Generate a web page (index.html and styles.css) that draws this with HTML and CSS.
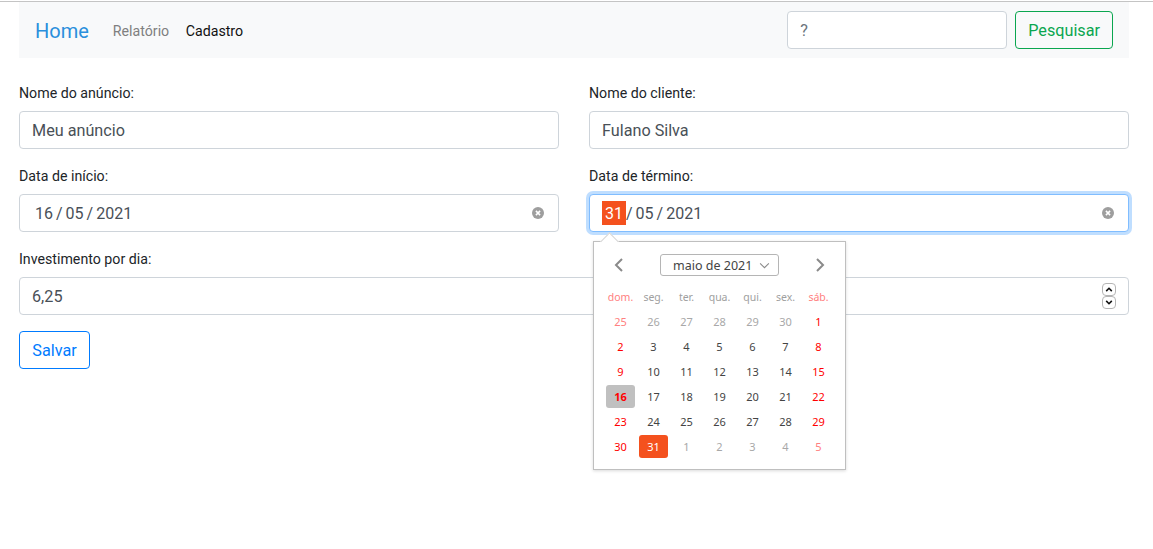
FILE: index.html
```html
<!DOCTYPE html>
<html lang="pt-BR">
<head>
    <meta charset="UTF-8">
    <meta name="viewport" content="width=device-width, initial-scale=1.0">
    <title>Cadastro</title>
    <link rel="stylesheet" href="styles.css">
</head>
<body>

    <div class="container">
        <nav class="navbar">
            <a class="brand" href="#">Home</a>
            <a class="nav-link" href="#">Relatório</a>
            <a class="nav-link active" href="#">Cadastro</a>
            <form class="search">
                <input class="search-input" type="text" placeholder="?">
                <button class="btn btn-green" type="button">Pesquisar</button>
            </form>
        </nav>

        <form class="ad-form">
            <div class="field">
                <label for="adName">Nome do anúncio:</label>
                <input class="form-control" type="text" id="adName" value="Meu anúncio">
            </div>
            <div class="field">
                <label for="clientName">Nome do cliente:</label>
                <input class="form-control" type="text" id="clientName" value="Fulano Silva">
            </div>
            <div class="field">
                <label>Data de início:</label>
                <div class="form-control date-input">
                    <span class="date-text"><span class="date-part">16</span>/<span class="date-part">05</span>/<span class="date-part">2021</span></span>
                    <svg class="clear-icon" viewBox="0 0 12 12"><circle cx="6" cy="6" r="6" fill="#9e9e9e"/><path d="M3.9 3.9l4.2 4.2M8.1 3.9l-4.2 4.2" stroke="#fff" stroke-width="1.5"/></svg>
                </div>
            </div>
            <div class="field">
                <label>Data de término:</label>
                <div class="form-control date-input focused">
                    <span class="date-text"><span class="date-part selected">31</span>/<span class="date-part">05</span>/<span class="date-part">2021</span></span>
                    <svg class="clear-icon" viewBox="0 0 12 12"><circle cx="6" cy="6" r="6" fill="#9e9e9e"/><path d="M3.9 3.9l4.2 4.2M8.1 3.9l-4.2 4.2" stroke="#fff" stroke-width="1.5"/></svg>
                </div>

                <div class="calendar">
                    <div class="cal-header">
                        <svg class="cal-arrow" viewBox="0 0 12 16"><path d="M9 2L3 8l6 6" fill="none" stroke="#8a8a8a" stroke-width="2"/></svg>
                        <div class="cal-month">maio de 2021
                            <svg viewBox="0 0 12 8"><path d="M1 1.5l5 5 5-5" fill="none" stroke="#8a8a8a" stroke-width="1.2"/></svg>
                        </div>
                        <svg class="cal-arrow" viewBox="0 0 12 16"><path d="M3 2l6 6-6 6" fill="none" stroke="#8a8a8a" stroke-width="2"/></svg>
                    </div>
                    <div class="cal-grid" id="calGrid"></div>
                </div>
            </div>
            <div class="field wide">
                <label for="daily">Investimento por dia:</label>
                <div class="form-control number-input">
                    <span>6,25</span>
                    <div class="spinner">
                        <span class="spin-btn"><svg viewBox="0 0 10 6"><path d="M1.5 5L5 1.5 8.5 5" fill="none" stroke="#111" stroke-width="2"/></svg></span>
                        <span class="spin-btn"><svg viewBox="0 0 10 6"><path d="M1.5 1L5 4.5 8.5 1" fill="none" stroke="#111" stroke-width="2"/></svg></span>
                    </div>
                </div>
            </div>
            <div class="field wide">
                <button class="btn btn-blue" type="button">Salvar</button>
            </div>
        </form>
    </div>

    <script>
        // Monta os dias do calendario de maio de 2021
        const grid = document.getElementById('calGrid');
        const weekdays = ['dom.', 'seg.', 'ter.', 'qua.', 'qui.', 'sex.', 'sáb.'];
        const days = [25, 26, 27, 28, 29, 30];
        for (let d = 1; d <= 31; d++) days.push(d);
        for (let d = 1; d <= 5; d++) days.push(d);

        weekdays.forEach(function(name, i) {
            const cell = document.createElement('div');
            cell.className = 'cal-weekday' + (i === 0 || i === 6 ? ' weekend' : '');
            cell.innerText = name;
            grid.appendChild(cell);
        });

        days.forEach(function(day, i) {
            const outside = i < 6 || i > 36;
            const cell = document.createElement('div');
            let cls = 'cal-day';
            if (i % 7 === 0 || i % 7 === 6) cls += ' weekend';
            if (outside) cls += ' outside';
            if (!outside && day === 16) cls += ' start';
            if (!outside && day === 31) cls += ' end';
            cell.className = cls;
            const inner = document.createElement('span');
            inner.innerText = day;
            cell.appendChild(inner);
            grid.appendChild(cell);
        });
    </script>

</body>
</html>
```

FILE: styles.css
```css
* {
    box-sizing: border-box;
}
html {
    padding-top: 1px;
    background-color: white;
}
body {
    font-family: Roboto, Arial, sans-serif;
    margin: 0;
    padding: 0;
    min-height: 548px;
    color: #212529;
    background-color: white;
    border-top: 1px solid #c4c4c4;
}
.container {
    padding: 0 24px 0 19px;
}
.navbar {
    display: flex;
    align-items: center;
    height: 56px;
    padding: 0 16px;
    background-color: #f8f9fa;
}
.brand {
    margin-right: 24px;
    padding-top: 2px;
    font-size: 20px;
    color: #2a8fdc;
    text-decoration: none;
}
.nav-link {
    margin-right: 16.5px;
    padding-top: 2px;
    font-size: 14.2px;
    color: #7f7f7f;
    text-decoration: none;
}
.nav-link.active {
    color: #111;
}
.search {
    display: flex;
    gap: 8px;
    margin-left: auto;
}
.search-input {
    width: 220px;
    height: 38px;
    padding: 6px 12px;
    font-family: inherit;
    font-size: 16.2px;
    color: #495057;
    background-color: white;
    border: 1px solid #ced4da;
    border-radius: 4px;
}
.search-input::placeholder {
    color: #6c757d;
}
.btn {
    height: 38px;
    padding: 0 12px;
    font-family: inherit;
    font-size: 16.2px;
    background: transparent;
    border-radius: 4px;
    cursor: pointer;
}
.btn-green {
    color: #0aa64f;
    border: 1px solid #0aa64f;
}
.btn-blue {
    width: 71px;
    color: #007bff;
    border: 1px solid #007bff;
}
.ad-form {
    display: grid;
    grid-template-columns: 1fr 1fr;
    column-gap: 30px;
    row-gap: 16px;
    margin-top: 24px;
}
.field {
    position: relative;
}
.field.wide {
    grid-column: 1 / 3;
}
label {
    display: block;
    margin-bottom: 7px;
    padding-top: 1px;
    font-size: 14.2px;
    line-height: 21px;
}
.form-control {
    display: flex;
    align-items: center;
    width: 100%;
    height: 38px;
    padding: 6px 12px;
    font-family: inherit;
    font-size: 16.2px;
    color: #495057;
    background-color: white;
    border: 1px solid #ced4da;
    border-radius: 4px;
}
.date-input.focused {
    border-color: #80bdff;
    box-shadow: 0 0 0 3px rgba(0, 123, 255, 0.25);
}
.date-text {
    flex: 1;
    display: flex;
    align-items: center;
    font-size: 16px;
}
.date-part {
    padding: 1px 3px 0;
    line-height: 23px;
}
.date-part.selected {
    color: white;
    background-color: #f4511e;
}
.clear-icon {
    width: 12px;
    height: 12px;
    margin-right: 2px;
}
.number-input {
    justify-content: space-between;
}
.spinner {
    display: flex;
    flex-direction: column;
}
.spin-btn {
    display: flex;
    align-items: center;
    justify-content: center;
    width: 14px;
    height: 13px;
    border: 1px solid #b5b5b5;
    border-radius: 4px;
}
.spin-btn svg {
    width: 8px;
    height: 5px;
}
.calendar {
    position: absolute;
    top: calc(100% + 9px);
    left: 4px;
    z-index: 2;
    width: 253px;
    height: 229px;
    padding: 0 10px;
    font-family: "Noto Sans", sans-serif;
    background-color: white;
    border: 1px solid #bfbfbf;
    box-shadow: 0 1px 3px rgba(0, 0, 0, 0.15);
}
.calendar::before {
    content: "";
    position: absolute;
    top: -7px;
    left: 9px;
    width: 12px;
    height: 12px;
    background-color: white;
    border-top: 1px solid #d5d5d5;
    border-left: 1px solid #d5d5d5;
    transform: rotate(45deg);
}
.cal-header {
    display: flex;
    align-items: center;
    gap: 35px;
    height: 43px;
    padding: 3px 0 0 9px;
}
.cal-arrow {
    width: 12px;
    height: 16px;
}
.cal-month {
    display: flex;
    align-items: center;
    justify-content: space-between;
    width: 119px;
    height: 22px;
    padding: 0 8px 0 12px;
    font-size: 12.5px;
    color: #444;
    border: 1px solid #b5b5b5;
    border-radius: 3px;
}
.cal-month svg {
    width: 11px;
    height: 7px;
}
.cal-grid {
    display: grid;
    grid-template-columns: repeat(7, 33px);
    grid-template-rows: 24px;
    grid-auto-rows: 25px;
    font-size: 11px;
    text-align: center;
}
.cal-weekday {
    line-height: 25px;
    font-size: 10.5px;
    color: #a0a0a0;
}
.cal-weekday.weekend {
    color: #ff8080;
}
.cal-day {
    display: flex;
    align-items: center;
    justify-content: center;
    color: #444;
}
.cal-day span {
    display: block;
    width: 29px;
    height: 23px;
    line-height: 23px;
    border-radius: 3px;
}
.cal-day.weekend {
    color: #ff0000;
}
.cal-day.outside {
    color: #a8a8a8;
}
.cal-day.outside.weekend {
    color: #ff8080;
}
.cal-day.start span {
    font-weight: bold;
    background-color: #c0c0c0;
}
.cal-day.end span {
    color: white;
    background-color: #f4511e;
}
```
